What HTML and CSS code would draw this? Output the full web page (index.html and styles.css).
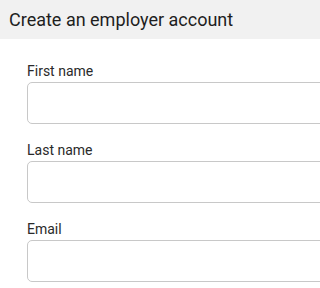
FILE: index.html
```html
<!DOCTYPE html>
<html lang="en">
<head>
<meta charset="utf-8">
<title>Create an employer account</title>
<link rel="stylesheet" href="styles.css">
</head>
<body>
<header class="page-header">
  <h1 class="page-title">Create an employer account</h1>
</header>
<form class="signup-form">
  <div class="field">
    <label class="field-label" for="first">First name</label>
    <input class="field-input" id="first" type="text">
  </div>
  <div class="field">
    <label class="field-label" for="last">Last name</label>
    <input class="field-input" id="last" type="text">
  </div>
  <div class="field">
    <label class="field-label" for="email">Email</label>
    <input class="field-input" id="email" type="email">
  </div>
</form>
</body>
</html>
```

FILE: styles.css
```css
* { box-sizing: border-box; }
html { overflow: hidden; }
html, body { margin: 0; padding: 0; background: #fff; }
body {
  font-family: Roboto, "Liberation Sans", sans-serif;
  color: #222;
}
.page-header {
  background: #f1f1f1;
  height: 39px;
  display: flex;
  align-items: center;
  padding-left: 9px;
}
.page-title {
  margin: 0;
  font-size: 18px;
  font-weight: 400;
  color: #1e1e1e;
  white-space: nowrap;
}
.signup-form {
  padding: 24px 0 0 27px;
  display: flex;
  flex-direction: column;
  gap: 18px;
  overflow: hidden;
}
.field {
  display: flex;
  flex-direction: column;
  gap: 2px;
}
.field-label {
  font-size: 14px;
  line-height: 17px;
  color: #2a2a2a;
}
.field-input {
  width: calc(100% + 40px);
  height: 42px;
  border: 1px solid #c8c8c8;
  border-radius: 5px;
  background: #fff;
  margin: 0;
}
```
